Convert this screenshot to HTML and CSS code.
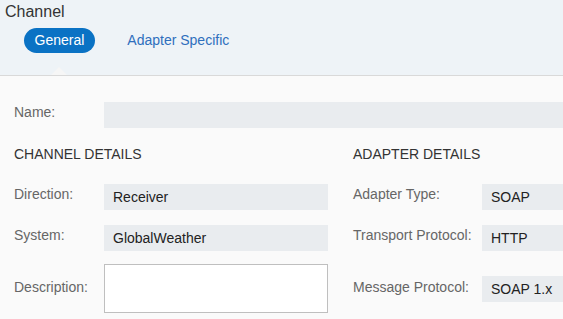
FILE: index.html
```html
<!DOCTYPE html>
<html>
  <head>
    <title>Channel</title>
    <link rel="stylesheet" href="styles.css">
  </head>
  <body>
    <div class="header">
      <div class="title">Channel</div>
      <div class="tabs">
        <span class="tab active">General</span>
        <span class="tab">Adapter Specific</span>
      </div>
    </div>

    <div class="content">
      <div class="name-row">
        <span class="label">Name:</span>
        <span class="field wide"></span>
      </div>

      <div class="details">
        <div class="section-title">CHANNEL DETAILS</div>
        <div class="section-title right">ADAPTER DETAILS</div>

        <span class="label">Direction:</span>
        <span class="field">Receiver</span>
        <span class="label right">Adapter Type:</span>
        <span class="field">SOAP</span>

        <span class="label">System:</span>
        <span class="field">GlobalWeather</span>
        <span class="label right">Transport Protocol:</span>
        <span class="field">HTTP</span>

        <span class="label mid">Description:</span>
        <span class="textarea mid"></span>
        <span class="label right mid">Message Protocol:</span>
        <span class="field mid">SOAP 1.x</span>
      </div>
    </div>
  </body>
</html>
```

FILE: styles.css
```css
html, body{
  margin: 0;
  overflow: hidden;
}

body{
  width: 563px;
  height: 319px;
  background-color: #fafafa;
  font-family: "Liberation Sans", Arial, sans-serif;
  font-size: 14px;
}

.header{
  height: 76px;
  background-color: #eef3f7;
  border-bottom: 1px solid #d9d9d9;
  padding-left: 5px;
  padding-top: 3px;
  box-sizing: border-box;
}

.title{
  font-size: 16px;
  line-height: 18px;
  color: #333;
}

.tabs{
  display: flex;
  margin-top: 7px;
  margin-left: 19px;
  gap: 22px;
}

.tab{
  position: relative;
  height: 25px;
  line-height: 25px;
  padding: 0 10.5px;
  border-radius: 13px;
  color: #2f6fbd;
}

.tab.active{
  background-color: #0a72c4;
  color: #fff;
}

.tab.active::after{
  content: "";
  position: absolute;
  left: 50%;
  top: 39px;
  margin-left: -8px;
  border-left: 8px solid transparent;
  border-right: 8px solid transparent;
  border-bottom: 8px solid #f6f6f6;
}

.content{
  padding: 26px 0 0 14px;
}

.name-row{
  display: flex;
  align-items: flex-start;
}

.name-row .label{
  width: 90px;
  flex: none;
}

.label{
  color: #666;
  line-height: 21px;
  white-space: nowrap;
}

.field{
  display: block;
  height: 26px;
  line-height: 26px;
  padding-left: 9px;
  background-color: #e9ecef;
  color: #222;
  white-space: nowrap;
  overflow: hidden;
}

.field.wide{
  flex: 1;
}

.details{
  display: grid;
  grid-template-columns: 90px 224px 154px 81px;
  grid-template-rows: 44px 41px 39px 49px;
  align-items: start;
  margin-top: 12px;
}

.section-title{
  grid-column: span 2;
  line-height: 28px;
  color: #333;
  white-space: nowrap;
}

.right{
  padding-left: 25px;
}

.mid{
  align-self: center;
}

.label.mid{
  padding-bottom: 3px;
}

.textarea{
  display: block;
  height: 49px;
  background-color: #fff;
  border: 1px solid #bfbfbf;
  box-sizing: border-box;
}
```
